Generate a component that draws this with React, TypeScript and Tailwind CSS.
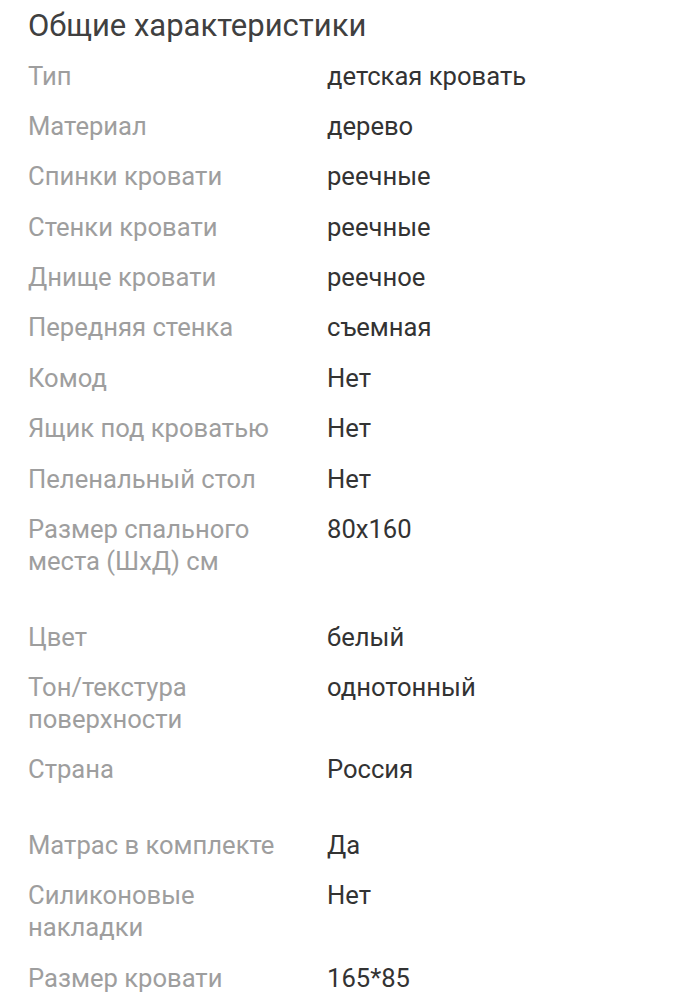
import React from "react";

type Row = { label: string[]; value: string; extra?: boolean };

const rows: Row[] = [
  { label: ["Тип"], value: "детская кровать" },
  { label: ["Материал"], value: "дерево" },
  { label: ["Спинки кровати"], value: "реечные" },
  { label: ["Стенки кровати"], value: "реечные" },
  { label: ["Днище кровати"], value: "реечное" },
  { label: ["Передняя стенка"], value: "съемная" },
  { label: ["Комод"], value: "Нет" },
  { label: ["Ящик под кроватью"], value: "Нет" },
  { label: ["Пеленальный стол"], value: "Нет" },
  { label: ["Размер спального", "места (ШхД) см"], value: "80x160", extra: true },
  { label: ["Цвет"], value: "белый" },
  { label: ["Тон/текстура", "поверхности"], value: "однотонный" },
  { label: ["Страна"], value: "Россия", extra: true },
  { label: ["Матрас в комплекте"], value: "Да" },
  { label: ["Силиконовые", "накладки"], value: "Нет" },
  { label: ["Размер кровати"], value: "165*85" },
];

export default function App() {
  return (
    <div
      className="w-[686px] h-[999px] bg-white overflow-hidden"
      style={{ fontFamily: "Roboto, 'Noto Sans', sans-serif" }}
    >
      <div className="pl-[28px] pt-[8px]">
        <h1 className="text-[31px] leading-[36px] text-[#404040] font-normal">
          Общие характеристики
        </h1>
        <div className="mt-[15.5px] flex flex-col">
          {rows.map((r, i) => (
            <div
              key={i}
              className={
                "grid grid-cols-[299px_1fr] text-[25.6px] leading-[32px] " +
                (r.extra ? "mb-[43.5px]" : "mb-[18.4px]")
              }
            >
              <div className="text-[#9e9e9e]">
                {r.label.map((l, j) => (
                  <div key={j}>{l}</div>
                ))}
              </div>
              <div className="text-[#333333]">{r.value}</div>
            </div>
          ))}
        </div>
      </div>
    </div>
  );
}
